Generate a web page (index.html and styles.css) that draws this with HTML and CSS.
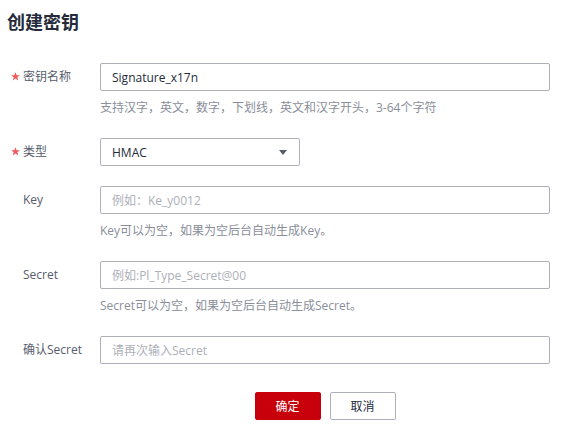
FILE: index.html
```html
<!DOCTYPE html>
<html lang="zh-CN">
<head>
<meta charset="utf-8">
<title>创建密钥</title>
<link rel="stylesheet" href="styles.css">
</head>
<body>
<div class="page">
  <h1 class="title">创建密钥</h1>
  <form class="form">
    <div class="row">
      <label class="label"><span class="star"><svg viewBox="0 0 10 10" width="9" height="9"><polygon points="5,0.2 6.3,3.5 9.9,3.5 7,5.8 8.1,9.5 5,7.3 1.9,9.5 3,5.8 0.1,3.5 3.7,3.5"/></svg></span>密钥名称</label>
      <div class="control">
        <div class="input"><span class="value">Signature_x17n</span></div>
        <div class="help">支持汉字，英文，数字，下划线，英文和汉字开头，3-64个字符</div>
      </div>
    </div>
    <div class="row">
      <label class="label"><span class="star"><svg viewBox="0 0 10 10" width="9" height="9"><polygon points="5,0.2 6.3,3.5 9.9,3.5 7,5.8 8.1,9.5 5,7.3 1.9,9.5 3,5.8 0.1,3.5 3.7,3.5"/></svg></span>类型</label>
      <div class="control">
        <div class="input select"><span class="value">HMAC</span><span class="caret"></span></div>
      </div>
    </div>
    <div class="row">
      <label class="label"><span class="star"></span>Key</label>
      <div class="control">
        <div class="input"><span class="placeholder">例如：Ke_y0012</span></div>
        <div class="help">Key可以为空，如果为空后台自动生成Key。</div>
      </div>
    </div>
    <div class="row">
      <label class="label"><span class="star"></span>Secret</label>
      <div class="control">
        <div class="input"><span class="placeholder">例如:Pl_Type_Secret@00</span></div>
        <div class="help">Secret可以为空，如果为空后台自动生成Secret。</div>
      </div>
    </div>
    <div class="row">
      <label class="label"><span class="star"></span>确认Secret</label>
      <div class="control">
        <div class="input"><span class="placeholder">请再次输入Secret</span></div>
      </div>
    </div>
    <div class="actions">
      <button type="button" class="btn primary">确定</button>
      <button type="button" class="btn">取消</button>
    </div>
  </form>
</div>
</body>
</html>
```
FILE: styles.css
```css
* { box-sizing: border-box; }
html, body { margin: 0; padding: 0; background: #fff; }
body {
  font-family: "Open Sans", "Noto Sans CJK SC", sans-serif;
  font-size: 12px;
  color: #252b3a;
}
.page { padding: 9px 7px 0; }
.title {
  margin: 0;
  font-size: 18px;
  line-height: 26px;
  font-weight: 700;
  color: #252b3a;
}
.form { margin-top: 28px; }
.row { display: flex; margin-bottom: 20px; }
.label {
  width: 93px;
  flex: none;
  padding-left: 3px;
  height: 28px;
  line-height: 28px;
  color: #575d6c;
  display: flex;
  align-items: center;
}
.star {
  width: 13px;
  height: 28px;
  flex: none;
  display: flex;
  align-items: center;
  padding-left: 1px;
  padding-bottom: 2px;
}
.star svg { fill: #f05a5a; display: block; }
.control { width: 450px; }
.input {
  height: 28px;
  border: 1px solid #adb0b8;
  border-radius: 2px;
  padding: 0 11px;
  display: flex;
  align-items: center;
  font-size: 12px;
}
.value { color: #252b3a; }
.placeholder { color: #adb0b8; }
.select {
  width: 200px;
  justify-content: space-between;
}
.caret {
  width: 0;
  height: 0;
  border-left: 4px solid transparent;
  border-right: 4px solid transparent;
  border-top: 5px solid #575d6c;
  margin-right: 1px;
}
.help {
  margin-top: 7px;
  line-height: 20px;
  color: #8a8e99;
}
.actions {
  margin-left: 93px;
  width: 450px;
  padding-top: 8px;
  display: flex;
  justify-content: center;
  gap: 9px;
}
.btn {
  width: 66px;
  height: 28px;
  border: 1px solid #adb0b8;
  border-radius: 2px;
  background: #fff;
  color: #252b3a;
  font-family: inherit;
  font-size: 12px;
  padding: 0;
}
.btn.primary {
  background: #c7000b;
  border-color: #c7000b;
  color: #fff;
}
```
